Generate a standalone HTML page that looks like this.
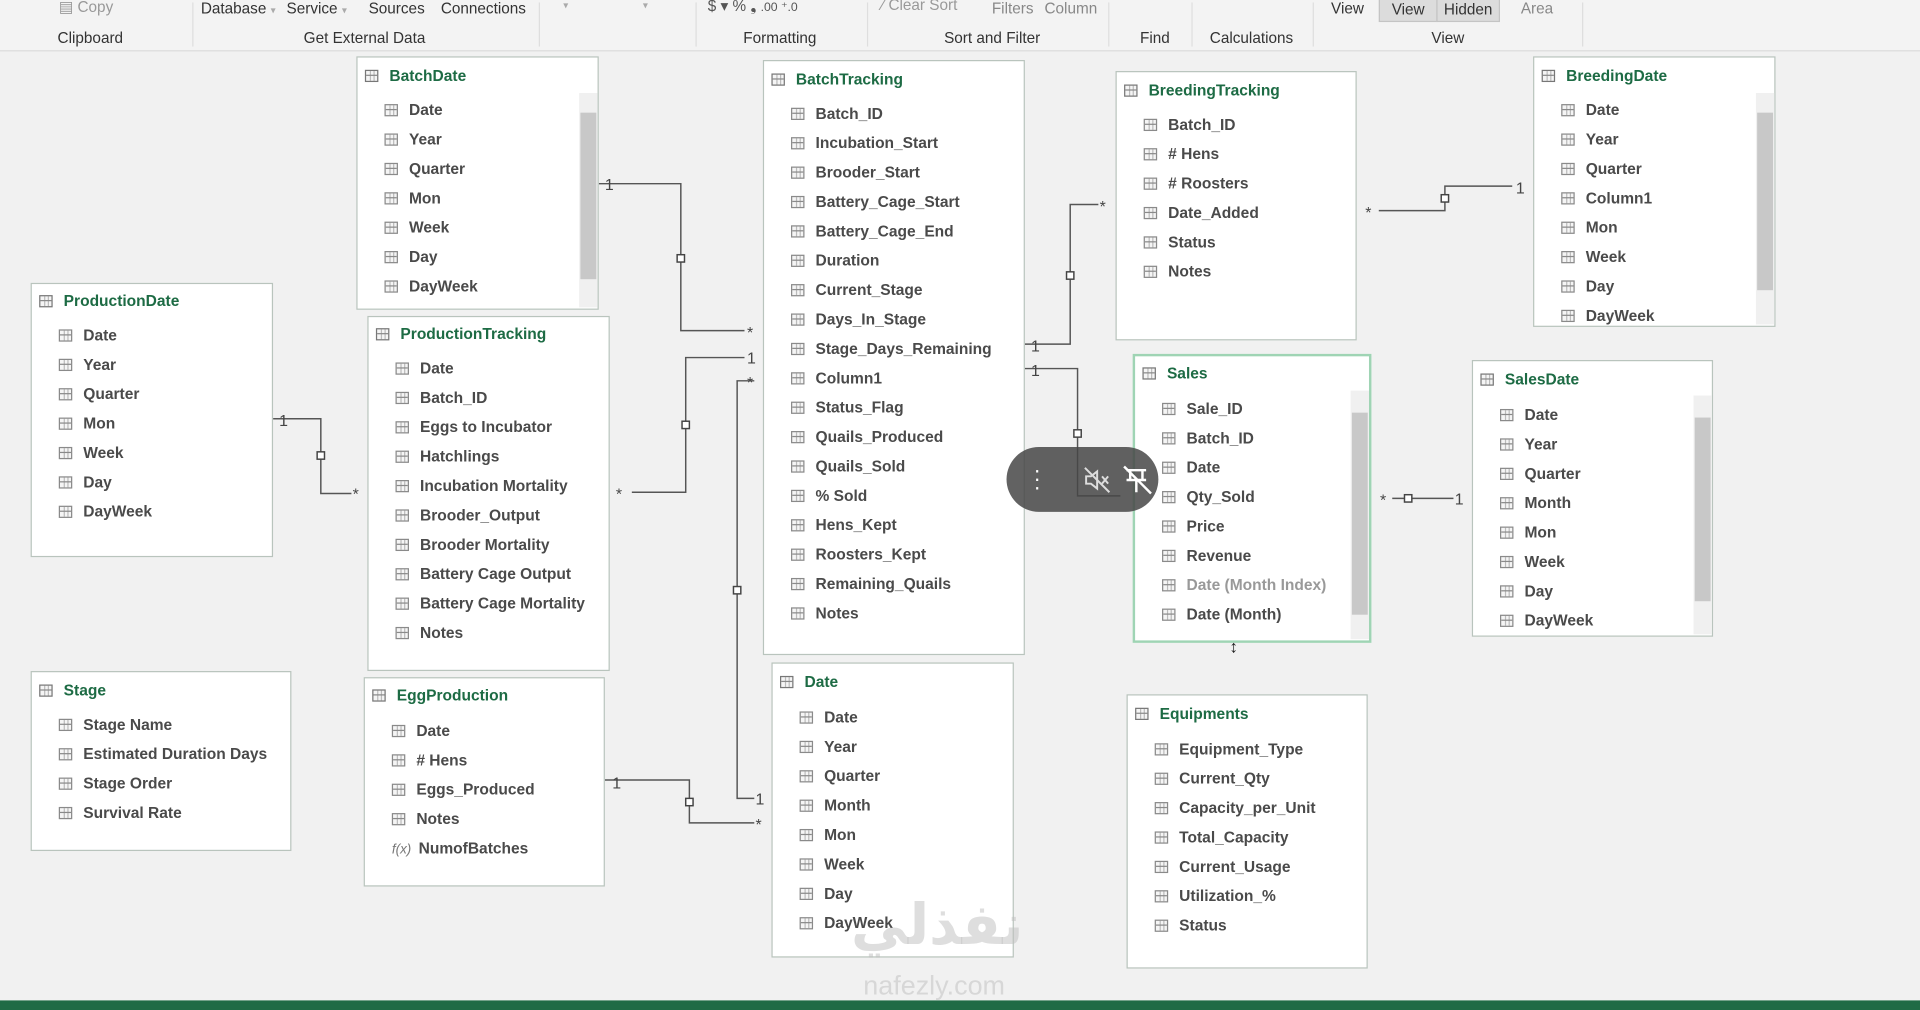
<!DOCTYPE html>
<html><head><meta charset="utf-8"><style>
body{margin:0;width:1920px;height:1010px;overflow:hidden;background:#f1f1f1;font-family:"Liberation Sans",sans-serif}
#w{position:absolute;left:0;top:0;width:1568px;height:825px;transform:scale(1.22449);transform-origin:0 0;background:#f1f1f1}
.rb{position:absolute;left:0;top:0;width:1568px;height:41px;background:#f3f3f3;border-bottom:1px solid #dcdcdc}
.rt{position:absolute;font-size:12.5px;color:#333;white-space:nowrap}
.sep{position:absolute;top:2px;width:1px;height:36px;background:#dedede}
.t{position:absolute;background:#fff;border:1px solid #b9c4bd;box-sizing:border-box}
.t .h{position:absolute;left:6px;font-weight:bold;font-size:12.7px;color:#1d6b44;white-space:nowrap}
.t .r{position:absolute;left:22px;font-weight:bold;font-size:12.7px;color:#4a4a4a;white-space:nowrap}
.ic{display:inline-block;width:11px;height:10px;border:1px solid #8a8a8a;box-sizing:border-box;margin-right:9px;vertical-align:-1px;background:linear-gradient(#8a8a8a,#8a8a8a) 0 3px/100% 1px no-repeat,linear-gradient(#bbb,#bbb) 3px 0/1px 100% no-repeat,linear-gradient(#bbb,#bbb) 6px 0/1px 100% no-repeat,#f5f5f5}
.h .ic{border-color:#777}
.sb{position:absolute;width:15px;background:#f0f0f0}
.th{position:absolute;left:1px;width:13px;background:#c8c8c8}
.lb{position:absolute;font-size:13px;color:#444}
</style></head><body><div id="w">
<div class="rb">
<div class="rt" style="left:48px;top:-2px;color:#999">▤ Copy</div>
<div class="rt" style="left:164px;top:0">Database <span style="color:#aaa;font-size:8px">▾</span></div>
<div class="rt" style="left:234px;top:0">Service <span style="color:#aaa;font-size:8px">▾</span></div>
<div class="rt" style="left:301px;top:0">Sources</div>
<div class="rt" style="left:360px;top:0">Connections</div>
<div class="rt" style="left:460px;top:0;color:#aaa;font-size:8px">▾</div>
<div class="rt" style="left:525px;top:0;color:#aaa;font-size:8px">▾</div>
<div class="rt" style="left:578px;top:-3px;color:#555">$ ▾ % ❟ <span style="font-size:10px">.00 ⁺.0</span></div>
<div class="rt" style="left:720px;top:-3px;color:#999">⁄ Clear Sort</div>
<div class="rt" style="left:810px;top:0;color:#888">Filters</div>
<div class="rt" style="left:853px;top:0;color:#888">Column</div>
<div class="rt" style="left:1087px;top:0">View</div>
<div class="rt" style="left:1126px;top:-2px;width:46px;height:18px;background:#dcdcdc;border:1px solid #c4c4c4;text-align:center;line-height:18px">View</div>
<div class="rt" style="left:1173px;top:-2px;width:50px;height:18px;background:#dcdcdc;border:1px solid #c4c4c4;text-align:center;line-height:18px">Hidden</div>
<div class="rt" style="left:1242px;top:0;color:#888">Area</div>
<div class="rt" style="left:47px;top:24px">Clipboard</div>
<div class="rt" style="left:248px;top:24px">Get External Data</div>
<div class="rt" style="left:607px;top:24px">Formatting</div>
<div class="rt" style="left:771px;top:24px">Sort and Filter</div>
<div class="rt" style="left:931px;top:24px">Find</div>
<div class="rt" style="left:988px;top:24px">Calculations</div>
<div class="rt" style="left:1169px;top:24px">View</div>
<div class="sep" style="left:157px"></div><div class="sep" style="left:440px"></div><div class="sep" style="left:568px"></div><div class="sep" style="left:708px"></div><div class="sep" style="left:905px"></div><div class="sep" style="left:973px"></div><div class="sep" style="left:1072px"></div><div class="sep" style="left:1292px"></div>
</div>

<svg style="position:absolute;left:0;top:0" width="1568" height="825" fill="none" stroke="#555" stroke-width="1.2">
<polyline points="489,150 556,150 556,270 608,270"/>
<polyline points="223,342 262,342 262,403 287,403"/>
<polyline points="516,402 560,402 560,292 608,292"/>
<polyline points="616,311 602,311 602,652 616,652"/>
<polyline points="494,637 563,637 563,672 616,672"/>
<polyline points="837,281 874,281 874,167 897,167"/>
<polyline points="837,301 880,301 880,405 915,405"/>
<polyline points="1126,172 1180,172 1180,152 1235,152"/>
<polyline points="1137,407 1187,407"/>
<g fill="#fff" stroke="#444"><rect x="553" y="208" width="6" height="6"/><rect x="259" y="369" width="6" height="6"/><rect x="557" y="344" width="6" height="6"/><rect x="599" y="479" width="6" height="6"/><rect x="560" y="652" width="6" height="6"/><rect x="871" y="222" width="6" height="6"/><rect x="877" y="351" width="6" height="6"/><rect x="1177" y="159" width="6" height="6"/><rect x="1147" y="404" width="6" height="6"/></g>
</svg>
<div class="lb" style="left:494px;top:143px">1</div><div class="lb" style="left:610px;top:264px">*</div>
<div class="lb" style="left:228px;top:336px">1</div><div class="lb" style="left:288px;top:396px">*</div>
<div class="lb" style="left:503px;top:396px">*</div><div class="lb" style="left:610px;top:285px">1</div>
<div class="lb" style="left:610px;top:305px">*</div><div class="lb" style="left:617px;top:645px">1</div>
<div class="lb" style="left:500px;top:632px">1</div><div class="lb" style="left:617px;top:666px">*</div>
<div class="lb" style="left:842px;top:275px">1</div><div class="lb" style="left:898px;top:161px">*</div>
<div class="lb" style="left:842px;top:295px">1</div>
<div class="lb" style="left:1115px;top:166px">*</div><div class="lb" style="left:1238px;top:146px">1</div>
<div class="lb" style="left:1127px;top:401px">*</div><div class="lb" style="left:1188px;top:400px">1</div>

<div class="t" style="left:291px;top:46px;width:198px;height:207px">
<div class="h" style="top:8px"><span class="ic"></span>BatchDate</div>
<div class="sb" style="left:181px;top:29px;height:175px"><div class="th" style="top:16px;height:136px"></div></div>
<div class="r" style="top:36px"><span class="ic"></span>Date</div><div class="r" style="top:60px"><span class="ic"></span>Year</div><div class="r" style="top:84px"><span class="ic"></span>Quarter</div><div class="r" style="top:108px"><span class="ic"></span>Mon</div><div class="r" style="top:132px"><span class="ic"></span>Week</div><div class="r" style="top:156px"><span class="ic"></span>Day</div><div class="r" style="top:180px"><span class="ic"></span>DayWeek</div>
</div>
<div class="t" style="left:25px;top:231px;width:198px;height:224px">
<div class="h" style="top:7px"><span class="ic"></span>ProductionDate</div>
<div class="r" style="top:35px"><span class="ic"></span>Date</div><div class="r" style="top:59px"><span class="ic"></span>Year</div><div class="r" style="top:83px"><span class="ic"></span>Quarter</div><div class="r" style="top:107px"><span class="ic"></span>Mon</div><div class="r" style="top:131px"><span class="ic"></span>Week</div><div class="r" style="top:155px"><span class="ic"></span>Day</div><div class="r" style="top:179px"><span class="ic"></span>DayWeek</div>
</div>
<div class="t" style="left:300px;top:258px;width:198px;height:290px">
<div class="h" style="top:7px"><span class="ic"></span>ProductionTracking</div>
<div class="r" style="top:35px"><span class="ic"></span>Date</div><div class="r" style="top:59px"><span class="ic"></span>Batch_ID</div><div class="r" style="top:83px"><span class="ic"></span>Eggs to Incubator</div><div class="r" style="top:107px"><span class="ic"></span>Hatchlings</div><div class="r" style="top:131px"><span class="ic"></span>Incubation Mortality</div><div class="r" style="top:155px"><span class="ic"></span>Brooder_Output</div><div class="r" style="top:179px"><span class="ic"></span>Brooder Mortality</div><div class="r" style="top:203px"><span class="ic"></span>Battery Cage Output</div><div class="r" style="top:227px"><span class="ic"></span>Battery Cage Mortality</div><div class="r" style="top:251px"><span class="ic"></span>Notes</div>
</div>
<div class="t" style="left:25px;top:548px;width:213px;height:147px">
<div class="h" style="top:8px"><span class="ic"></span>Stage</div>
<div class="r" style="top:36px"><span class="ic"></span>Stage Name</div><div class="r" style="top:60px"><span class="ic"></span>Estimated Duration Days</div><div class="r" style="top:84px"><span class="ic"></span>Stage Order</div><div class="r" style="top:108px"><span class="ic"></span>Survival Rate</div>
</div>
<div class="t" style="left:297px;top:553px;width:197px;height:171px">
<div class="h" style="top:7px"><span class="ic"></span>EggProduction</div>
<div class="r" style="top:36px"><span class="ic"></span>Date</div><div class="r" style="top:60px"><span class="ic"></span># Hens</div><div class="r" style="top:84px"><span class="ic"></span>Eggs_Produced</div><div class="r" style="top:108px"><span class="ic"></span>Notes</div><div class="r" style="top:132px"><span style="font-style:italic;font-weight:normal;color:#777;font-size:11px;margin-right:6px">f(x)</span>NumofBatches</div>
</div>
<div class="t" style="left:623px;top:49px;width:214px;height:486px">
<div class="h" style="top:8px"><span class="ic"></span>BatchTracking</div>
<div class="r" style="top:36px"><span class="ic"></span>Batch_ID</div><div class="r" style="top:60px"><span class="ic"></span>Incubation_Start</div><div class="r" style="top:84px"><span class="ic"></span>Brooder_Start</div><div class="r" style="top:108px"><span class="ic"></span>Battery_Cage_Start</div><div class="r" style="top:132px"><span class="ic"></span>Battery_Cage_End</div><div class="r" style="top:156px"><span class="ic"></span>Duration</div><div class="r" style="top:180px"><span class="ic"></span>Current_Stage</div><div class="r" style="top:204px"><span class="ic"></span>Days_In_Stage</div><div class="r" style="top:228px"><span class="ic"></span>Stage_Days_Remaining</div><div class="r" style="top:252px"><span class="ic"></span>Column1</div><div class="r" style="top:276px"><span class="ic"></span>Status_Flag</div><div class="r" style="top:300px"><span class="ic"></span>Quails_Produced</div><div class="r" style="top:324px"><span class="ic"></span>Quails_Sold</div><div class="r" style="top:348px"><span class="ic"></span>% Sold</div><div class="r" style="top:372px"><span class="ic"></span>Hens_Kept</div><div class="r" style="top:396px"><span class="ic"></span>Roosters_Kept</div><div class="r" style="top:420px"><span class="ic"></span>Remaining_Quails</div><div class="r" style="top:444px"><span class="ic"></span>Notes</div>
</div>
<div class="t" style="left:630px;top:541px;width:198px;height:241px">
<div class="h" style="top:8px"><span class="ic"></span>Date</div>
<div class="r" style="top:37px"><span class="ic"></span>Date</div><div class="r" style="top:61px"><span class="ic"></span>Year</div><div class="r" style="top:85px"><span class="ic"></span>Quarter</div><div class="r" style="top:109px"><span class="ic"></span>Month</div><div class="r" style="top:133px"><span class="ic"></span>Mon</div><div class="r" style="top:157px"><span class="ic"></span>Week</div><div class="r" style="top:181px"><span class="ic"></span>Day</div><div class="r" style="top:205px"><span class="ic"></span>DayWeek</div>
</div>
<div class="t" style="left:911px;top:58px;width:197px;height:220px">
<div class="h" style="top:8px"><span class="ic"></span>BreedingTracking</div>
<div class="r" style="top:36px"><span class="ic"></span>Batch_ID</div><div class="r" style="top:60px"><span class="ic"></span># Hens</div><div class="r" style="top:84px"><span class="ic"></span># Roosters</div><div class="r" style="top:108px"><span class="ic"></span>Date_Added</div><div class="r" style="top:132px"><span class="ic"></span>Status</div><div class="r" style="top:156px"><span class="ic"></span>Notes</div>
</div>
<div class="t" style="left:925px;top:289px;width:195px;height:236px;border:2px solid #9fd4b4">
<div class="h" style="top:7px"><span class="ic"></span>Sales</div>
<div class="sb" style="left:176px;top:28px;height:203px"><div class="th" style="top:18px;height:165px"></div></div>
<div class="r" style="top:36px"><span class="ic"></span>Sale_ID</div><div class="r" style="top:60px"><span class="ic"></span>Batch_ID</div><div class="r" style="top:84px"><span class="ic"></span>Date</div><div class="r" style="top:108px"><span class="ic"></span>Qty_Sold</div><div class="r" style="top:132px"><span class="ic"></span>Price</div><div class="r" style="top:156px"><span class="ic"></span>Revenue</div><div class="r" style="top:180px;color:#999"><span class="ic"></span>Date (Month Index)</div><div class="r" style="top:204px"><span class="ic"></span>Date (Month)</div>
</div>
<div style="position:absolute;left:1004px;top:520px;font-size:14px;color:#222">↕</div>
<div class="t" style="left:920px;top:567px;width:197px;height:224px">
<div class="h" style="top:8px"><span class="ic"></span>Equipments</div>
<div class="r" style="top:37px"><span class="ic"></span>Equipment_Type</div><div class="r" style="top:61px"><span class="ic"></span>Current_Qty</div><div class="r" style="top:85px"><span class="ic"></span>Capacity_per_Unit</div><div class="r" style="top:109px"><span class="ic"></span>Total_Capacity</div><div class="r" style="top:133px"><span class="ic"></span>Current_Usage</div><div class="r" style="top:157px"><span class="ic"></span>Utilization_%</div><div class="r" style="top:181px"><span class="ic"></span>Status</div>
</div>
<div class="t" style="left:1252px;top:46px;width:198px;height:221px">
<div class="h" style="top:8px"><span class="ic"></span>BreedingDate</div>
<div class="sb" style="left:181px;top:29px;height:189px"><div class="th" style="top:16px;height:145px"></div></div>
<div class="r" style="top:36px"><span class="ic"></span>Date</div><div class="r" style="top:60px"><span class="ic"></span>Year</div><div class="r" style="top:84px"><span class="ic"></span>Quarter</div><div class="r" style="top:108px"><span class="ic"></span>Column1</div><div class="r" style="top:132px"><span class="ic"></span>Mon</div><div class="r" style="top:156px"><span class="ic"></span>Week</div><div class="r" style="top:180px"><span class="ic"></span>Day</div><div class="r" style="top:204px"><span class="ic"></span>DayWeek</div>
</div>
<div class="t" style="left:1202px;top:294px;width:197px;height:226px">
<div class="h" style="top:8px"><span class="ic"></span>SalesDate</div>
<div class="sb" style="left:180px;top:28px;height:195px"><div class="th" style="top:18px;height:150px"></div></div>
<div class="r" style="top:37px"><span class="ic"></span>Date</div><div class="r" style="top:61px"><span class="ic"></span>Year</div><div class="r" style="top:85px"><span class="ic"></span>Quarter</div><div class="r" style="top:109px"><span class="ic"></span>Month</div><div class="r" style="top:133px"><span class="ic"></span>Mon</div><div class="r" style="top:157px"><span class="ic"></span>Week</div><div class="r" style="top:181px"><span class="ic"></span>Day</div><div class="r" style="top:205px"><span class="ic"></span>DayWeek</div>
</div>

<div style="position:absolute;left:822px;top:365px;width:124px;height:53px;border-radius:27px;background:rgba(70,70,70,0.85)">
<div style="position:absolute;left:22px;top:16px;color:#fff;font-size:18px;line-height:7px">·<br>·<br>·</div>
<svg style="position:absolute;left:62px;top:15px" width="24" height="24" fill="none" stroke="#ddd" stroke-width="1.6"><path d="M3 9h4l5-4v14l-5-4H3z"/><path d="M16 9l5 6M21 9l-5 6"/><path d="M2 2l20 20"/></svg>
<svg style="position:absolute;left:92px;top:13px" width="28" height="28" fill="none" stroke="#fff" stroke-width="2"><path d="M6 6h16M9 6v8M19 6v8M6 14h16M14 14v10M4 3l22 22"/></svg>
</div>
<div style="position:absolute;left:695px;top:728px;font-size:46px;font-weight:bold;color:rgba(190,190,190,0.5);font-family:'DejaVu Sans',sans-serif">نفذلي</div>
<div style="position:absolute;left:705px;top:792px;font-size:22px;color:rgba(190,190,190,0.5)">nafezly.com</div>
<div style="position:absolute;left:0;top:817px;width:1568px;height:8px;background:#1f6b45"></div>
</div></body></html>
